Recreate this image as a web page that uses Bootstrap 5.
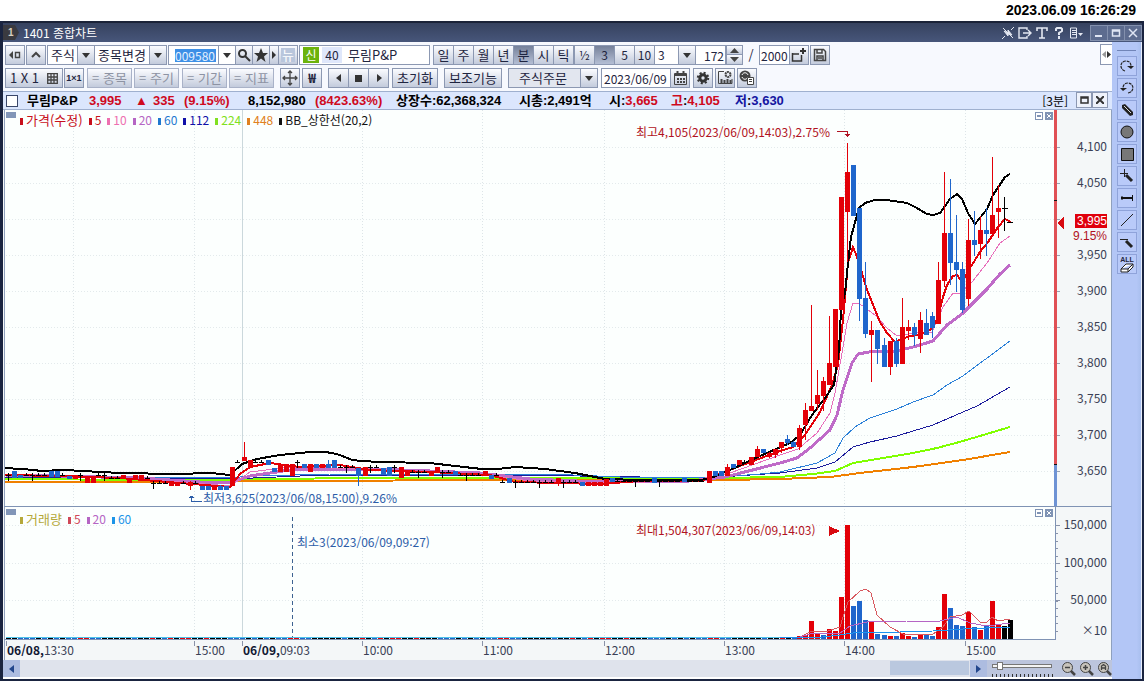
<!DOCTYPE html>
<html lang="ko">
<head>
<meta charset="utf-8">
<meta name="viewport" content="width=device-width, initial-scale=1">
<title>1401 종합차트</title>
<link href="https://cdn.jsdelivr.net/npm/bootstrap@5.3.0/dist/css/bootstrap.min.css" rel="stylesheet">
<script src="https://cdn.jsdelivr.net/npm/bootstrap@5.3.0/dist/js/bootstrap.bundle.min.js"></script>
<style>
  :root { --edge:#8c98b2; --ink:#1f2540; --face:linear-gradient(#fbfcff,#c3cbdc); }
  body { font-family:"Noto Sans CJK KR",sans-serif; font-size:13px; line-height:16px; color:var(--ink); background:#fff; }
  button, input, select { font:inherit; color:inherit; }
  svg { display:block; }
  .clock { height:21px; padding-right:8px; font:bold 14px/20px "Liberation Sans",sans-serif; color:#000; }
  .frame { border:solid #1a2440; border-width:0 2px 2px 3px; }
  .caption { height:21px; background:linear-gradient(#36425f,#47567a); border-top:2px solid #1b2338; color:#fff; font-size:12px; }
  .caption button { border:0; background:none; padding:0; color:#e4e8f2; }
  .capicons { gap:3px; }
  .tagno { width:16px; height:15px; background:#3a3a40; color:#d8d0c0; font:bold 10px/15px "Liberation Sans",sans-serif; padding-left:5px; clip-path:polygon(0 0,75% 0,100% 50%,75% 100%,0 100%); }
  .caption .wbtns button { width:18px; height:16px; border:1px solid #8390ad; background:#5d6c8f; margin-left:-1px; }
  .tools { background:#f7f9fe; padding:3px 0 3px 2px; height:49px; }
  .rows { gap:3px; }
  .trow { height:20px; }
  .tb { height:20px; min-width:20px; padding:0; border:1px solid var(--edge); background:var(--face); display:flex; align-items:center; justify-content:center; line-height:18px; white-space:nowrap; border-radius:0; }
  .tb.dim { color:#8d93a3; width:45px; border-color:#a9b2c8; }
  .tb.wide { width:58px; }
  .tb.mid { width:46px; }
  .tb.less { min-width:18px; width:18px; }
  .tb.slim { min-width:10px; width:10px; }
  .tb.on { background:linear-gradient(#76819a,#b4bed4); }
  .join > * + * { margin-left:-1px; }
  .cells .tb { min-width:21px; }
  .cells .num { font-size:12px; }
  .field { height:20px; border:1px solid var(--edge); background:#fff; padding:0 3px; outline:0; border-radius:0; min-width:0; font-size:12px; }
  .pick { appearance:none; background:#fff url("data:image/svg+xml,%3Csvg xmlns='http://www.w3.org/2000/svg' width='17' height='18'%3E%3Cdefs%3E%3ClinearGradient id='g' x2='0' y2='1'%3E%3Cstop stop-color='%23fbfcff'/%3E%3Cstop offset='1' stop-color='%23c3cbdc'/%3E%3C/linearGradient%3E%3C/defs%3E%3Cpath fill='url(%23g)' d='M0 0h17v18H0z'/%3E%3Cpath fill='%238c98b2' d='M0 0h1v18H0z'/%3E%3Cpath fill='%23333' d='M5 7h8l-4 5z'/%3E%3C/svg%3E") no-repeat right center; }
  .p-s { width:48px; } .p-m { width:73px; } .p-n { width:42px; } .p-o { width:90px; padding-left:10px; background-color:#e2e6ef; }
  .p-s, .p-m, .p-o { font-size:13px; }
  .f-date { width:70px; padding:0 2px; } .f-num { width:31px; padding:0 1px; }
  .codebox { width:68px; } .codebox input { width:41px; height:13px; line-height:12px; border:0; padding:0; margin-left:3px; background:#3c8fe6; color:#e5f0ff; outline:0; }
  .namebox { width:131px; } .namebox b { background:#6cb30c; color:#fff; width:16px; height:16px; font-weight:400; text-align:center; margin-right:3px; }
  .namebox i { background:#dfe7fb; width:20px; text-align:center; font-style:normal; margin-right:6px; }
  .namebox span { font-size:13px; }
  .spin { width:17px; height:20px; } .spin button { height:10px; min-width:0; width:17px; } .spin button + button { margin:-1px 0 0; height:11px; }
  .slash { width:16px; text-align:center; line-height:20px; }
  .off1 { margin-left:1px; } .off2 { margin-left:2px; } .off3 { margin-left:3px; } .off6 { margin-left:6px; }
  .newsmark { background:#b9c6dc; color:#fff; width:14px; line-height:14px; }
  .times { font:bold 9px/18px "Liberation Sans",sans-serif; }
  .info { height:19px; background:#dbe6fd; border:1px solid #9fb0cf; border-width:1px 0; color:#000; font:bold 13px/18px "Liberation Sans","Noto Sans CJK KR",sans-serif; padding-left:3px; white-space:nowrap; }
  .quote { display:grid; grid-template-columns:21px 62px 46px 18px 31px 64px 67px 81px 123px 90px 62px 64px 60px; }
  .quote > * { min-width:0; }
  .info input { appearance:none; width:12px; height:12px; border:1px solid #3b476a; background:#fff; margin:3px 0 0; }
  .info .pane { width:16px; height:16px; padding:0; border:1px solid #8c98b2; background:#eef2fb; display:flex; align-items:center; justify-content:center; }
  .unit { font-family:"Noto Sans CJK KR",sans-serif; font-size:12px; }
  .red { color:#cf0a1e; } .blue { color:#1414a0; }
  .chartbox { position:relative; }
  .chartbox svg.plot { width:100%; height:auto; }
  .plot text { fill:#3a3f55; font-size:12px; }
  .plot .end { text-anchor:end; }
  .plot .hi { fill:#b11222; } .plot .lo { fill:#2c5da8; }
  .plot .tagprice { fill:#fff; } .plot .tight { font-family:"Liberation Sans",sans-serif; }
  .plot .strong { font-weight:bold; fill:#111733; }
  .keys { position:absolute; left:17px; gap:6px; font-size:12px; line-height:14px; white-space:nowrap; }
  .keys.top1 { top:3px; } .keys.top2 { top:73%; }
  .keys span::before { content:""; display:inline-block; width:3px; height:7px; background:currentColor; margin-right:3px; }
  .k1,.k2 { color:#c8101c; } .k3 { color:#ee6fb0; } .k4 { color:#b565c4; } .k5 { color:#1f78d0; } .k6 { color:#1010a8; }
  .k7 { color:#80e020; } .k8 { color:#e08020; } .k9 { color:#111; } .k10 { color:#b5a83a; } .k11 { color:#d04858; } .k12 { color:#1c94e8; }
  .keys .k1, .keys .k10 { font-size:13px; }
  .scrollrow { height:19px; background:#dfe3ec; border-bottom:2px solid #fff; }
  .sbtn { width:17px; border:0; padding:0; background:#adbce0; display:flex; align-items:center; justify-content:center; }
  .thumb { width:79px; background:#bac8df; margin:1px 1px 2px 0; }
  .zoomer { width:125px; background:#bcc5dd; padding-left:5px; gap:3px; }
  .slide { width:62px; height:17px; background:repeating-linear-gradient(90deg,#333 0 1px,transparent 1px 4px) 0 100%/100% 3px no-repeat; }
  .slide input { appearance:none; width:60px; height:4px; border:1px solid #777; background:#f4f4f4; display:block; margin-top:4px; outline:0; }
  .slide input::-webkit-slider-thumb { appearance:none; width:6px; height:8px; background:#fff; border:1px solid #777; }
  .zoomer button { border:0; padding:0; background:none; width:15px; height:16px; }
  .side { width:30px; background:linear-gradient(90deg,#b3c6f6 0 85%,#a9bfee); padding:8px 0 0 5px; border-right:1px solid #e8eefc; }
  .side hr { width:19px; margin:0 0 5px; border:0; border-top:1px solid #7185b8; opacity:1; }
  .side button { width:20px; height:20px; padding:0; margin-bottom:2px; border:1px solid #8fa3da; background:#b9caf9; display:flex; align-items:center; justify-content:center; }
  .alltxt span { font:bold 7px/7px "Liberation Sans",sans-serif; }
  .flap { width:12px; height:21px; padding:0; border:1px solid var(--edge); border-right:0; background:#fff; margin-top:-1px; }
</style>
</head>
<body>
<div class="d-flex flex-column min-vh-100">
<div class="clock text-end">2023.06.09 16:26:29</div>
<div class="frame flex-grow-1 d-flex flex-column">

<header class="caption d-flex align-items-center">
  <span class="tagno">1</span><span class="ms-1">1401 종합차트</span>
  <div class="capicons ms-auto d-flex align-items-center me-2">
    <button aria-label="고정 해제"><svg width="14" height="14" fill="none" stroke="currentColor"><path d="M2 2l10 10M1 13l3-3M10 4l3-3"/><path d="M3 5l4 5V7zM7 4v4l4 1z" fill="currentColor"/></svg></button>
    <button aria-label="내보내기"><svg width="14" height="14" fill="none" stroke="currentColor" stroke-width="1.4"><path d="M9 4V2H1v10h8v-2M5 7h8M10 4l3 3-3 3"/></svg></button>
    <button aria-label="글꼴"><svg width="14" height="14" fill="none" stroke="currentColor" stroke-width="1.6"><path d="M2 5V2h10v3M7 2v10M4 12h6"/></svg></button>
    <button aria-label="도움말"><svg width="14" height="14" fill="none" stroke="currentColor" stroke-width="2"><path d="M4 5V3l1-1h4l1 1v2L7 7v2M7 10v3"/></svg></button>
    <button aria-label="메뉴"><svg width="14" height="14" fill="none" stroke="currentColor"><path d="M1.500 2v10h6V2zM3 4.500h4M3 6.500h4M3 8.500h4"/><path d="M9 7h5l-2.500 3z" fill="currentColor" stroke="none"/></svg></button>
  </div>
  <div class="wbtns d-flex">
    <button aria-label="최소화"><svg width="16" height="14" viewBox="1 0 16 14"><path d="M5 9h7v2H5z" fill="#dfe5f3"/></svg></button>
    <button aria-label="최대화"><svg width="16" height="14" viewBox="1 0 16 14"><path d="M5.500 4h7v6h-7zM5 5h8" fill="none" stroke="#dfe5f3" stroke-width="1.500"/></svg></button>
    <button aria-label="닫기"><svg width="16" height="14" viewBox="1 0 16 14"><path d="M5 3l8 8M13 3l-8 8" stroke="#dfe5f3" stroke-width="1.500"/></svg></button>
  </div>
</header>

<div class="d-flex flex-grow-1">
<main class="flex-grow-1 d-flex flex-column overflow-hidden">

<div class="tools d-flex">
 <div class="rows d-flex flex-column">
  <div class="trow d-flex">
    <button class="tb" aria-label="이전"><svg width="14" height="12" fill="#444"><path d="M5 2v8L1 6z"/><path d="M7.500 3.500h4v5h-4z" fill="none" stroke="#444" stroke-width="1.400"/></svg></button>
    <button class="tb off1" aria-label="위"><svg width="12" height="12"><path d="M2 8l4-4 4 4" fill="none" stroke="#444" stroke-width="2"/></svg></button>
    <div class="join d-flex off1">
      <select class="field pick p-s" aria-label="시장"><option>주식</option></select>
      <select class="field pick p-m" aria-label="종목 변경"><option>종목변경</option></select>
    </div>
    <div class="join d-flex off1">
      <div class="field codebox d-flex align-items-center pe-0 justify-content-between"><input value="009580" aria-label="종목코드"><svg width="17" height="18"><path d="M5 7h8l-4 5z" fill="#333"/><path d="M.5 0v18" stroke="#8c98b2"/></svg></div>
      <button class="tb less" aria-label="검색"><svg width="14" height="14" fill="none" stroke="#333" stroke-width="2"><circle cx="5.500" cy="5.500" r="3.500"/><path d="M8 8l5 5"/></svg></button>
      <button class="tb less" aria-label="관심"><svg width="14" height="14"><path d="M7 0l2 5h5l-4 3.500L11.500 14 7 10.500 2.500 14 4 8.500 0 5h5z" fill="#333"/></svg></button>
      <button class="tb slim" aria-label="더보기"><svg width="5" height="8"><path d="M0 0l4 4-4 4z" fill="#333"/></svg></button>
      <button class="tb" aria-label="뉴스"><span class="newsmark">뉴</span></button>
    </div>
    <div class="field namebox d-flex align-items-center off1"><b>신</b><i>40</i><span>무림P&amp;P</span></div>
    <div class="join cells d-flex off3">
      <button class="tb">일</button><button class="tb">주</button><button class="tb">월</button><button class="tb">년</button><button class="tb on">분</button><button class="tb">시</button><button class="tb">틱</button>
    </div>
    <div class="join cells d-flex">
      <button class="tb num">½</button><button class="tb num on">3</button><button class="tb num">5</button><button class="tb num">10</button>
      <select class="field pick p-n" aria-label="간격"><option>3</option></select>
      <input class="field f-num text-end" value="172" aria-label="봉 개수">
    </div>
    <div class="spin d-flex flex-column"><button class="tb" aria-label="증가"><svg width="9" height="5"><path d="M0 5l4.500-5L9 5z" fill="#444"/></svg></button><button class="tb" aria-label="감소"><svg width="9" height="5"><path d="M0 0l4.500 5L9 0z" fill="#444"/></svg></button></div>
    <span class="slash">/</span>
    <div class="join d-flex">
      <input class="field f-num" value="2000" aria-label="전체 개수">
      <button class="tb" aria-label="추가"><svg width="16" height="16" fill="none" stroke="#333"><path d="M1.500 6v8h9V8M1 7h7" stroke-width="1.500"/><path d="M12 1v6M9 4h6" stroke-width="2"/></svg></button>
    </div>
    <button class="tb off1" aria-label="저장"><svg width="14" height="14" fill="none" stroke="#444" stroke-width="1.500"><path d="M1.500 1.500h9l2 2v9h-11zM4 2v3h5V2M4 12V8h6v4M5 10h4"/></svg></button>
  </div>
  <div class="trow d-flex">
    <button class="tb wide gap-2">1 X 1<svg width="11" height="11" fill="none" stroke="#444" stroke-width="1.300"><path d="M.7.700h9.600v9.600H.7zM.7 4h10M.7 7h10M4 .7v10M7 .7v10"/></svg></button>
    <button class="tb off1 times">1×1</button>
    <button class="tb dim off3">= 종목</button><button class="tb dim off2">= 주기</button><button class="tb dim off3">= 기간</button><button class="tb dim off2">= 지표</button>
    <button class="tb off6" aria-label="이동"><svg width="16" height="16" fill="none" stroke="#444" stroke-width="1.300"><path d="M8 1v14M1 8h14M6 3l2-2 2 2M6 13l2 2 2-2M3 6L1 8l2 2M13 6l2 2-2 2"/></svg></button>
    <button class="tb off2 fw-bold">₩</button>
    <div class="join cells d-flex off6">
      <button class="tb" aria-label="뒤로"><svg width="8" height="8"><path d="M6 0v8L1 4z" fill="#333"/></svg></button><button class="tb" aria-label="정지"><svg width="7" height="7"><path d="M0 0h7v7H0z" fill="#333"/></svg></button><button class="tb" aria-label="앞으로"><svg width="8" height="8"><path d="M2 0v8l5-4z" fill="#333"/></svg></button>
    </div>
    <button class="tb mid off3">초기화</button>
    <button class="tb wide off6">보조기능</button>
    <select class="field pick p-o off6" aria-label="주문"><option>주식주문</option></select>
    <div class="join d-flex off3">
      <input class="field f-date" value="2023/06/09" aria-label="날짜">
      <button class="tb" aria-label="달력"><svg width="13" height="14" fill="none" stroke="#444"><path d="M.5 2.500h12v11H.5z"/><path d="M0 4h13M3.500 0v3M9.500 0v3" stroke-width="2"/><path d="M3 8h8M3 11h8" stroke-width="2" stroke-dasharray="2 1"/></svg></button>
    </div>
    <button class="tb off3" aria-label="설정"><svg width="14" height="14"><circle cx="7" cy="7" r="3.200" fill="none" stroke="#333" stroke-width="3"/><circle cx="7" cy="7" r="5.200" fill="none" stroke="#333" stroke-width="2" stroke-dasharray="2.040 2.040"/></svg></button>
    <button class="tb off2" aria-label="차트 설정"><svg width="16" height="16" fill="none" stroke="#444"><path d="M7 1.500H1.500v12H15V9"/><path d="M4.500 13V9M7.500 13v-3M10.500 13v-4M13.500 13v-3" stroke-width="2"/><circle cx="11" cy="4.500" r="2.500" stroke-width="2" stroke-dasharray="2 .6"/></svg></button>
    <button class="tb off2" aria-label="종목 자료"><svg width="16" height="16"><circle cx="6" cy="6" r="5.500" fill="#444"/><path d="M3 5c1-3 5-3 6 0M9 7c-1 3-5 3-6 0" fill="none" stroke="#fff"/><path d="M8.500 7.500h6v7h-6zM10 9.500h3M10 11.500h3" fill="#fff" stroke="#444"/></svg></button>
  </div>
 </div>
 <button class="flap ms-auto" aria-label="도구 접기"><svg width="11" height="19"><path d="M5 6v7L1 9.500z" fill="#999"/><path d="M6 6v7l4-3.500z" fill="#333"/></svg></button>
</div>

<div class="info d-flex">
  <div class="quote flex-grow-1">
    <input type="checkbox" aria-label="종목 선택"><span>무림P&amp;P</span><span class="red">3,995</span><span class="red">▲</span><span class="red">335</span><span class="red">(9.15%)</span><span>8,152,980</span><span class="red">(8423.63%)</span><span>상장수:62,368,324</span><span>시총:2,491억</span><span>시:<span class="red">3,665</span></span><span><span class="red">고</span>:<span class="red">4,105</span></span><span><span class="blue">저</span>:<span class="blue">3,630</span></span>
  </div>
  <span class="fw-normal me-1 pe-1 unit">[3분]</span>
  <div class="d-flex me-1">
    <button class="pane" aria-label="창 확대"><svg width="9" height="8"><path d="M1 1h7v6H1zM1 2h7" fill="none" stroke="#333" stroke-width="1.500"/></svg></button>
    <button class="pane" aria-label="창 닫기"><svg width="8" height="8"><path d="M0 0l8 8M8 0L0 8" stroke="#333" stroke-width="2"/></svg></button>
  </div>
</div>

<div class="chartbox">
<svg class="plot" viewBox="3 110 1109 550" shape-rendering="crispEdges" role="img" aria-label="가격과 거래량 차트">
  <path fill="#f4f7f8" d="M3 110h1109v550H3z"/>
  <path fill="#fcfffe" d="M5 110h1050v529H5z"/>
  <g id="grid"></g>
  <path d="M4.500 110v550M1111.500 110v550" stroke="#8fa0bd"/>
  <path d="M242.500 110v529" stroke="#cbd8dc"/>
  <path d="M4 506.500h1108M4 639.500h1052M1055.500 507v133" stroke="#7f93b4" fill="none"/>
  <path fill="#8296b8" d="M6 112h10v6H6zM6 509h10v6H6z"/>
  <path fill="#e05055" d="M1054 110h3v354h-3z"/><path fill="#111" d="M1054 200h3v1h-3zM1054 464h3v1h-3z"/><path fill="#6e93d4" d="M1054 465h3v41h-3z"/>
  <g fill="none" id="averages"></g>
  <path d="M292.500 517v122" stroke="#3d6291" stroke-dasharray="4 3"/>
  <g id="volume"></g>
  <g fill="none" id="volumeAverages"></g>
  <g id="axis"></g>
  <g fill="#fff" stroke="#7f93b4">
    <path d="M1035.500 112.500h7v7h-7zM1035.500 509.500h7v7h-7z"/><path d="M1037 115.500h4M1037 116.500h4M1037 512.500h4M1037 513.500h4"/>
    <path d="M1045.500 112.500h7v7h-7zM1045.500 509.500h7v7h-7z" fill="#7f93b4"/><path d="M1047 114l4 4M1051 114l-4 4M1047 511l4 4M1051 511l-4 4" stroke="#fff" shape-rendering="auto"/>
  </g>
  <text class="hi" x="636" y="137">최고4,105(2023/06/09,14:03),2.75%</text>
  <path d="M837 131.500h10.500v5M845 134.500h5M846 135.500h3" stroke="#b11222" fill="none"/>
  <text class="lo" x="203" y="503">최저3,625(2023/06/08,15:00),9.26%</text>
  <path d="M202 501.500h-10.500v-5M189 497.500h5M190 496.500h3" stroke="#2c5da8" fill="none"/>
  <text class="lo" x="297" y="547">최소3(2023/06/09,09:27)</text>
  <text class="hi" x="636" y="535">최대1,504,307(2023/06/09,14:03)</text>
  <path d="M829 526v10l11-5zM1064 217v12l-7-6z" fill="#d80a10"/>
  <path d="M1075 214h32v14h-32z" fill="#e0000c"/>
  <text class="end tight tagprice" x="1107" y="225">3,995</text>
  <text class="end tight hi" x="1107" y="240">9.15%</text>
</svg>
<div class="keys top1 d-flex"><span class="k1">가격(수정)</span><span class="k2">5</span><span class="k3">10</span><span class="k4">20</span><span class="k5">60</span><span class="k6">112</span><span class="k7">224</span><span class="k8">448</span><span class="k9">BB_상한선(20,2)</span></div>
<div class="keys top2 d-flex"><span class="k10">거래량</span><span class="k11">5</span><span class="k4">20</span><span class="k12">60</span></div>
</div>

<div class="scrollrow d-flex mt-auto">
  <button class="sbtn" aria-label="왼쪽으로"><svg width="5" height="8"><path d="M5 0v8L0 4z" fill="#23468c"/></svg></button>
  <span class="flex-grow-1"></span><span class="thumb"></span>
  <button class="sbtn" aria-label="오른쪽으로"><svg width="5" height="8"><path d="M0 0v8l5-4z" fill="#23468c"/></svg></button>
  <div class="zoomer d-flex">
    <div class="slide me-1"><input type="range" min="0" max="100" value="8" aria-label="확대 비율"></div>
    <button aria-label="축소"><svg width="15" height="16" fill="none" stroke="#444"><path d="M10 11l4 4" stroke-width="2.500"/><circle cx="6.500" cy="7.500" r="5" fill="#c8c4bc"/><path d="M4 7.500h5" stroke-width="1.500"/></svg></button>
    <button aria-label="확대"><svg width="15" height="16" fill="none" stroke="#444"><path d="M10 11l4 4" stroke-width="2.500"/><circle cx="6.500" cy="7.500" r="5" fill="#c8c4bc"/><path d="M4 7.500h5M6.500 5v5" stroke-width="1.500"/></svg></button>
    <button aria-label="전체 보기"><svg width="15" height="16" fill="none" stroke="#444"><path d="M10 11l4 4" stroke-width="2.500"/><circle cx="6.500" cy="7.500" r="5" fill="#c8c4bc"/><path d="M4.500 10V6l2-1.500 2 1.500v4M5 8h3" stroke-width="1.300"/></svg></button>
  </div>
</div>
</main>

<aside class="side">
  <hr>
  <button aria-label="다시 실행"><svg width="16" height="16" fill="none" stroke="#222" stroke-width="1.200"><path d="M6 13C0 11 1 3 7 3c4 0 5 3 5 5" stroke-dasharray="3 .8"/><path d="M8 8h7l-3 3z" fill="#222" stroke="none"/></svg></button>
  <button aria-label="실행 취소"><svg width="16" height="16" fill="none" stroke="#222" stroke-width="1.200"><path d="M9 13c7-1 6-10 0-10-4 0-5 3-5 5" stroke-dasharray="3 .8"/><path d="M1 8h7l-4 3z" fill="#222" stroke="none"/></svg></button>
  <button aria-label="펜"><svg width="16" height="16"><path d="M3 3l3-1 8 8v3l-3 1-8-8z" fill="#222"/><path d="M5 4l7 7" stroke="#ddd"/></svg></button>
  <button aria-label="원"><svg width="16" height="16"><circle cx="8" cy="8" r="6" fill="#777" stroke="#111"/></svg></button>
  <button aria-label="사각형"><svg width="16" height="16"><path d="M2.500 2.500h12v12h-12z" fill="#777" stroke="#111"/></svg></button>
  <button aria-label="십자 펜"><svg width="16" height="16" stroke="#222"><path d="M1 5.500h8M5.500 1v8" fill="none"/><path d="M7 7l6 6" stroke-width="3"/></svg></button>
  <button aria-label="수평선"><svg width="16" height="16" stroke="#111"><path d="M2 8h12" stroke-width="2"/><path d="M13.500 5v6M3 6v4"/></svg></button>
  <button aria-label="추세선"><svg width="16" height="16"><path d="M2 14L14 2" stroke="#222"/></svg></button>
  <button aria-label="선 펜"><svg width="16" height="16" stroke="#222"><path d="M1 5.500h8"/><path d="M7 7l6 6" stroke-width="3"/></svg></button>
  <button class="flex-column alltxt" aria-label="모두 지우기"><span>ALL</span><svg width="14" height="10"><path d="M1 6l5-5h7l-5 5zM1 6v3h7l5-5V1M8 6v3" fill="#fff" stroke="#222"/></svg></button>
</aside>
</div>
</div>
</div>

<script>
const R='#e30008', B='#1f66cc', K='#000';
const put=(id,s)=>document.getElementById(id).innerHTML+=s;
const rect=(x,y,w,h,c)=>`<rect x="${x}" y="${y}" width="${w}" height="${h}" fill="${c}"/>`;

// grid and axis marks
let g='';
for(const y of [147,183,219,255,291,327,363,399,435,471,525,563,600]) g+=`<path d="M6 ${y}.5H1054" stroke="#e3eaec" stroke-dasharray="1 2"/>`;
const hours=[[73,''],[194,'15:00'],[362,'10:00'],[482,'11:00'],[604,'12:00'],[724,'13:00'],[844,'14:00'],[965,'15:00']];
for(const [x] of hours) g+=`<path d="M${x}.5 110V638" stroke="#dde5e8" stroke-dasharray="1 2"/>`;
put('grid',g);
let a='';
for(const [x,t] of hours) if(t) a+=`<path d="M${x}.5 641v5" stroke="#8a93a8"/><text x="${x+1}" y="655">${t}</text>`;
a+=`<path d="M6.500 641v5M242.500 641v5" stroke="#8a93a8"/><text x="7" y="655"><tspan class="strong">06/08,</tspan>13:30</text><text x="243" y="655"><tspan class="strong">06/09,</tspan>09:03</text>`;
for(let i=0;i<10;i++){ const y=147+36*i, p=4100-50*i; a+=`<path d="M1057 ${y}.5h3" stroke="#9aa3b4"/>`; if(p!==4000) a+=`<text class="end" x="1107" y="${y+4}">${p.toLocaleString('en-US')}</text>`; }
for(const [y,t] of [[525,'150,000'],[563,'100,000'],[600,'50,000']]) a+=`<path d="M1056 ${y}.5h4" stroke="#8a93a8"/><text class="end" x="1107" y="${y+4}">${t}</text>`;
for(let i=1;i<15;i++) a+=`<path d="M1056 ${Math.round(638-7.5*i)}.5h2" stroke="#8a93a8"/>`;
a+='<text class="end" x="1107" y="635">×10</text>';
put('axis',a);

// candles: centre, body top, body bottom, wick top, wick bottom, colour
const candles=[
[14,471,478,471,478,B],[20,475,478,475,478,B],[51,471,477,471,477,B],[57,471,477,471,477,B],[69,476,479,476,479,B],[75,475,479,475,479,R],[87,478,483,478,483,R],[93,478,483,478,483,R],
[123,475,479,475,479,R],[129,479,483,479,483,R],[135,475,479,475,479,R],[141,475,479,475,479,R],[171,482,486,482,486,R],[177,482,486,482,486,R],[190,482,486,481,490,R],[202,486,490,486,490,B],[208,486,490,486,490,B],[214,486,490,486,490,R],[220,486,490,485,490,B],[226,486,490,486,490,B],
[232,467,486,467,486,R],[244,457,461,442,461,R],[250,460,467,460,467,R],[268,460,465,460,465,B],[274,468,472,468,472,B],[280,464,472,464,472,R],[286,464,472,464,472,R],[292,464,476,464,476,R],[304,464,468,464,468,B],[310,464,472,464,472,R],[316,464,468,464,468,B],[322,464,468,464,468,R],[328,464,468,460,468,B],[334,460,468,460,468,B],[358,468,476,468,486,B],[365,467,476,467,476,R],
[383,468,475,468,475,B],[389,467,476,467,476,B],[401,467,478,467,478,R],[407,471,476,471,476,R],[431,471,476,471,476,R],[437,467,472,467,472,R],[455,471,475,471,475,B],[485,471,476,471,476,R],[491,475,479,475,479,B],[509,478,483,478,483,B],[558,478,483,478,486,R],[582,482,486,482,486,B],[588,482,486,482,486,R],[594,482,486,482,486,R],[600,482,486,482,486,R],[606,479,486,479,486,R],[612,478,482,478,482,B],[654,478,483,478,483,B],[684,478,482,478,482,B],
[709,471,483,471,483,R],[715,471,476,471,476,B],[721,471,476,471,476,B],[727,467,476,464,476,R],[733,464,468,464,468,B],[739,460,465,460,465,R],[751,457,465,457,465,R],[757,449,457,446,457,R],[763,449,453,449,453,B],[769,453,457,452,458,R],[775,449,455,449,458,R],[781,442,448,442,453,R],[787,439,443,435,445,B],[793,442,447,441,447,B],[799,428,447,425,450,R],[805,410,425,403,440,R],[811,406,411,305,411,R],[817,395,404,370,410,R],[823,381,396,377,411,R],[829,363,385,316,385,R],[835,309,367,309,367,R],
[841,197,310,197,310,R],[847,172,212,143,262,R],[853,165,216,165,216,B],[859,208,299,208,321,B],[865,298,334,262,338,B],[871,330,335,321,382,R],[877,330,349,330,364,B],[884,345,367,338,367,B],[890,341,367,341,375,R],[896,341,364,338,367,B],[902,327,364,298,364,R],[908,327,331,320,340,R],[914,327,335,323,346,B],[920,320,339,312,353,R],[926,323,335,309,335,B],[932,316,328,312,338,B],[938,280,324,262,324,R],[944,233,281,172,287,R],[950,233,263,179,285,B],[956,262,270,215,292,B],[962,269,310,262,313,B],[968,240,299,219,306,R],[974,240,245,211,256,B],[980,230,244,216,259,R],[986,230,234,208,256,B],[992,215,234,157,234,R],[998,208,212,185,238,R]];
const averages=[
['#f08000',2,'5,482 150,482 320,481 470,480 720,480 780,479 830,477 860,473 913,467 963,460 1010,452'],
['#80ff00',2,'5,479 150,480 230,480 250,479 380,478 520,478 720,478 780,477 813,474 835,471 853,463 913,453 937,448 963,441 1010,427'],
['#1c1c9c',1,'5,477 80,477 230,479 300,476 450,475 520,475 640,477 720,477 780,473 817,468 835,462 853,447 870,442 897,436 913,431 933,425 963,412 977,406 1010,387'],
['#2b80d8',1,'5,476 230,478 250,476 330,474 440,474 550,474 620,477 720,477 760,474 780,472 817,463 835,453 843,438 855,427 870,418 897,409 913,402 933,395 947,385 963,376 983,361 1010,341'],
['#bf6bc8',3,'5,475 60,476 140,478 200,482 232,482 250,476 290,470 370,469 430,471 480,473 530,479 600,482 690,481 725,477 780,463 797,458 810,448 830,430 837,415 843,390 852,363 858,354 875,351 897,351 913,347 933,341 947,325 962,314 987,289 1000,274 1010,265'],
['#e86fbb',1,'5,474 100,477 180,482 230,486 250,472 290,467 370,469 480,474 530,481 600,483 690,481 730,473 780,455 798,449 817,433 830,413 835,393 842,353 847,323 853,303 858,303 863,306 875,315 887,328 897,336 913,333 932,332 943,307 953,293 960,293 972,282 987,263 1000,243 1010,236'],
['#e30008',2,'5,475 60,476 120,478 180,483 230,487 240,474 250,467 270,463 300,467 340,465 370,470 430,472 490,475 515,482 600,484 640,481 700,481 712,477 740,466 780,451 793,447 805,435 820,412 832,385 838,365 843,320 848,263 853,247 857,257 862,273 867,290 880,322 887,333 895,342 907,337 920,334 930,330 937,320 943,297 947,285 953,276 957,275 962,282 970,268 980,252 988,242 998,227 1005,219 1011,222'],
['#000',2,'5,468 35,470 40,471 64,470 120,473 175,474 211,473 230,475 242,464 257,459 280,455 310,452 325,452 332,453 340,455 352,460 362,461 380,462 430,463 455,466 482,469 498,469 515,467 545,469 575,473 605,479 640,480 700,480 711,478 730,470 760,456 790,443 800,435 812,415 825,398 834,385 839,350 841,310 845,293 847,273 851,237 857,215 859,208 865,203 875,200 887,200 907,203 915,207 927,214 933,215 940,213 950,199 957,194 962,199 968,213 975,224 987,209 993,195 1005,177 1010,174']];
const line=([c,w,p])=>`<polyline points="${p}" stroke="${c}" stroke-width="${w}"/>`;
put('averages',averages.map(line).join(''));

// flat candles fill the slots that have no body
let flat='';
const level=x=>x<110?475:x<150?478:x<200?483:x<235?487:x<300?462:x<400?467:x<450?472:x<500?475:x<600?482:x<730?481:462;
const used=new Set(candles.map(c=>Math.round((c[0]-8)/6.03)));
for(let i=0;i<123;i++) if(!used.has(i)){ const x=Math.round(8+i*6.03), y=level(x); flat+=rect(x-2,y,5,1,K)+rect(x,y-2,1,i%4?3:8,K); }
put('averages',flat+candles.map(([x,t,b,wt,wb,c])=>rect(x,wt,1,wb-wt,c)+rect(x-2,t,5,b-t,c)).join('')
  +rect(1002,208,6,1,K)+rect(1004,197,1,34,K)+rect(1007,222,6,1,K));

// volume bars: centre, top, colour
const vols=[[799,636,R],[805,635,R],[811,621,R],[817,634,R],[823,635,B],[829,629,R],[835,631,R],[841,597,R],[847,525,R],[853,606,B],[859,601,B],[865,620,B],[871,621,R],[877,634,B],[884,635,B],[890,636,R],[896,636,B],[902,633,R],[908,636,R],[914,637,B],[920,635,R],[926,635,B],[932,636,B],[938,627,R],[944,594,R],[950,608,B],[956,625,B],[962,626,B],[968,612,R],[974,627,B],[980,630,R],[986,626,B],[992,601,R],[998,625,R],[1004,626,K],[1010,620,K]];
let v='';
for(let i=0;i<132;i++){ const x=6+i*6; v+=rect(x,638,5,1,[K,K,B,R,B,K,R][(i*i+Math.floor(i/5))%7]); }
put('volume',v+rect(6,637,790,1,'#4fc3e8')+vols.map(([x,t,c])=>rect(x-2,t,5,639-t,c)).join(''));
put('volumeAverages',[
['#d85a60',1,'800,637 810,632 828,631 840,627 843,617 848,602 860,591 866,589 871,593 877,615 890,627 903,634 933,634 943,627 950,617 962,615 969,611 980,622 987,622 992,617 998,621 1010,619'],
['#b565c4',1,'800,637 810,634 840,633 850,626 867,622 907,621 940,621 957,617 970,623 987,626 1010,623'],
['#1c94f0',1,'780,638 823,637 840,635 853,633 900,632 933,631 963,629 1010,627']].map(line).join(''));
</script>
</body>
</html>
